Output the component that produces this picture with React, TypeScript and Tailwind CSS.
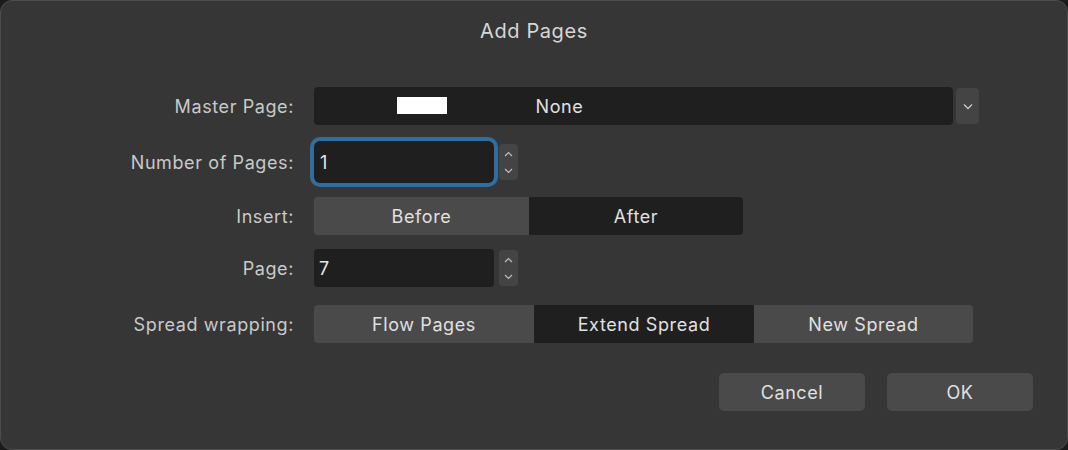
const font = { fontFamily: '"Helvetica Neue", Inter, "Liberation Sans", sans-serif' };

function Stepper() {
  return (
    <div className="ml-[5px] w-[19px] h-[36px] rounded-[4px] bg-[#444444] flex flex-col items-center justify-center gap-[11px] text-[#bdbdbd]">
      <svg width="9" height="6" viewBox="0 0 9 6"><path d="M1 5 L4.5 1.5 L8 5" fill="none" stroke="currentColor" strokeWidth="1.2" /></svg>
      <svg width="9" height="6" viewBox="0 0 9 6"><path d="M1 1 L4.5 4.5 L8 1" fill="none" stroke="currentColor" strokeWidth="1.2" /></svg>
    </div>
  );
}

function Row({ label, children, className = '' }: { label: string; children: React.ReactNode; className?: string }) {
  return (
    <div className={`flex items-center ${className}`}>
      <div className="w-[293px] text-right text-[18px] tracking-[0.6px] text-[#c9c9c9]">{label}</div>
      <div className="ml-[20px] flex items-center">{children}</div>
    </div>
  );
}

export default function App() {
  return (
    <div className="w-[1068px] h-[450px] bg-[#1b1b1b]" style={font}>
      <div className="w-full h-full rounded-[12px] bg-[#363636] border border-[#4d4d4d] flex flex-col">
        <div className="pt-[15px] text-center text-[20px] tracking-[0.6px] text-[#d6d6d6]">Add Pages</div>
        <div className="mt-[41px] flex flex-col text-[18px] tracking-[0.6px]">
          <Row label="Master Page:">
            <div className="w-[639px] h-[38px] rounded-[4px] bg-[#1f1f1f] flex items-center relative">
              <div className="absolute left-[83px] top-[10px] w-[50px] h-[17px] bg-white" />
              <div className="w-full text-center text-[#e0e0e0] pr-[148px]">None</div>
            </div>
            <div className="ml-[3px] w-[23px] h-[36px] rounded-[4px] bg-[#444444] flex items-center justify-center text-[#c8c8c8]">
              <svg width="10" height="7" viewBox="0 0 10 7"><path d="M1 1.5 L5 5.5 L9 1.5" fill="none" stroke="currentColor" strokeWidth="1.3" /></svg>
            </div>
          </Row>
          <Row label="Number of Pages:" className="mt-[16px]">
            <div className="w-[180px] h-[42px] rounded-[6px] bg-[#1f1f1f] ring-[4px] ring-[#2f6e9e] flex items-center pl-[6px] text-[#e6e6e6]">1</div>
            <Stepper />
          </Row>
          <Row label="Insert:" className="mt-[14px]">
            <div className="flex h-[38px] rounded-[4px] overflow-hidden text-[#e0e0e0]">
              <div className="w-[215px] bg-[#4a4a4a] flex items-center justify-center">Before</div>
              <div className="w-[214px] bg-[#1f1f1f] flex items-center justify-center">After</div>
            </div>
          </Row>
          <Row label="Page:" className="mt-[14px]">
            <div className="w-[180px] h-[38px] rounded-[4px] bg-[#1f1f1f] flex items-center pl-[5px] text-[#e6e6e6]">7</div>
            <Stepper />
          </Row>
          <Row label="Spread wrapping:" className="mt-[18px]">
            <div className="flex h-[38px] rounded-[4px] overflow-hidden text-[#e0e0e0]">
              <div className="w-[220px] bg-[#4a4a4a] flex items-center justify-center">Flow Pages</div>
              <div className="w-[220px] bg-[#1f1f1f] flex items-center justify-center">Extend Spread</div>
              <div className="w-[219px] bg-[#4a4a4a] flex items-center justify-center">New Spread</div>
            </div>
          </Row>
        </div>
        <div className="mt-[30px] flex justify-end pr-[34px] gap-[22px] text-[18px] tracking-[0.6px] text-[#e0e0e0]">
          <div className="w-[146px] h-[38px] rounded-[5px] bg-[#4a4a4a] flex items-center justify-center">Cancel</div>
          <div className="w-[146px] h-[38px] rounded-[5px] bg-[#4a4a4a] flex items-center justify-center">OK</div>
        </div>
      </div>
    </div>
  );
}
